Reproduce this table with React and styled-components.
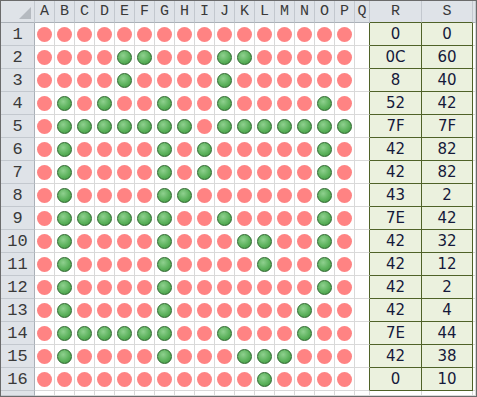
import React from "react";
import styled, { createGlobalStyle, css } from "styled-components";

const GlobalStyle = createGlobalStyle`
  html, body {
    margin: 0;
    padding: 0;
    background: #ffffff;
  }
`;

const LETTERS = "ABCDEFGHIJKLMNOP".split("");

// hex pairs for each row: R covers A-H, S covers I-P (MSB = leftmost column)
const ROWS = [
  ["0", "0"],
  ["0C", "60"],
  ["8", "40"],
  ["52", "42"],
  ["7F", "7F"],
  ["42", "82"],
  ["42", "82"],
  ["43", "2"],
  ["7E", "42"],
  ["42", "32"],
  ["42", "12"],
  ["42", "2"],
  ["42", "4"],
  ["7E", "44"],
  ["42", "38"],
  ["0", "10"],
];

const bitsOf = (hex) => {
  const n = parseInt(hex, 16);
  return Array.from({ length: 8 }, (_, i) => ((n >> (7 - i)) & 1) === 1);
};

const Frame = styled.div`
  width: 477px;
  height: 397px;
  box-sizing: border-box;
  border: 1px solid #6b6b6b;
  overflow: hidden;
  background: #ffffff;
`;

const Sheet = styled.div`
  display: grid;
  grid-template-columns: 34px repeat(16, 20px) 15px 52px 51px 1fr;
  grid-template-rows: 22px repeat(16, 23px) 1fr;
  height: 100%;
`;

const HeadCell = styled.div`
  box-sizing: border-box;
  background: #dfe3e8;
  border-right: 1px solid #c3c8ce;
  border-bottom: 1px solid ${(p) => (p.$olive ? "#4f6228" : "#aab0b7")};
  display: flex;
  align-items: center;
  justify-content: center;
  font-family: "Liberation Mono", monospace;
  font-size: 15px;
  color: #3a3a3a;
`;

const Corner = styled(HeadCell)`
  align-items: flex-end;
  justify-content: flex-end;
  padding: 0 3px 3px 0;
`;

const Triangle = styled.div`
  width: 12px;
  height: 12px;
  background: #b5bac0;
  clip-path: polygon(100% 0, 100% 100%, 0 100%);
`;

const RowHead = styled.div`
  box-sizing: border-box;
  background: #dfe3e8;
  border-right: 1px solid #aab0b7;
  border-bottom: 1px solid #c3c8ce;
  display: flex;
  align-items: center;
  justify-content: center;
  font-family: "Liberation Mono", monospace;
  font-size: 17px;
  color: #3a3a3a;
`;

const Cell = styled.div`
  box-sizing: border-box;
  border-right: 1px solid ${(p) => (p.$oliveRight ? "#4f6228" : "#d9d9d9")};
  border-bottom: 1px solid #d9d9d9;
  display: flex;
  align-items: center;
  justify-content: center;
`;

const Dot = styled.div`
  width: 15px;
  height: 15px;
  border-radius: 50%;
  box-sizing: border-box;
  ${(p) =>
    p.$on
      ? css`
          background: radial-gradient(circle at 40% 35%, #8fd08f 0%, #5cb25c 55%, #3e8f3e 100%);
          border: 1px solid #2c662c;
        `
      : css`
          background: #ff8383;
        `}
`;

const ValueCell = styled.div`
  box-sizing: border-box;
  background: #ebf1de;
  border-right: 1px solid #4f6228;
  border-bottom: 1px solid ${(p) => (p.$last ? "#d9d9d9" : "#4f6228")};
  display: flex;
  align-items: center;
  justify-content: center;
  font-family: "DejaVu Sans", sans-serif;
  font-size: 15px;
  color: #15193a;
  ${(p) => p.$last && css`
    background: #ffffff;
    border-right-color: #d9d9d9;
  `}
`;

export default function App() {
  return (
    <>
      <GlobalStyle />
      <Frame>
        <Sheet>
          <Corner>
            <Triangle />
          </Corner>
          {LETTERS.map((l) => (
            <HeadCell key={l}>{l}</HeadCell>
          ))}
          <HeadCell>Q</HeadCell>
          <HeadCell $olive>R</HeadCell>
          <HeadCell $olive>S</HeadCell>
          <HeadCell />

          {ROWS.map(([r, s], i) => {
            const bits = [...bitsOf(r), ...bitsOf(s)];
            return (
              <React.Fragment key={i}>
                <RowHead>{i + 1}</RowHead>
                {bits.map((on, j) => (
                  <Cell key={j}>
                    <Dot $on={on} />
                  </Cell>
                ))}
                <Cell $oliveRight />
                <ValueCell>{r}</ValueCell>
                <ValueCell>{s}</ValueCell>
                <Cell />
              </React.Fragment>
            );
          })}

          <RowHead />
          {LETTERS.map((l) => (
            <Cell key={l} />
          ))}
          <Cell />
          <ValueCell $last />
          <ValueCell $last />
          <Cell />
        </Sheet>
      </Frame>
    </>
  );
}
